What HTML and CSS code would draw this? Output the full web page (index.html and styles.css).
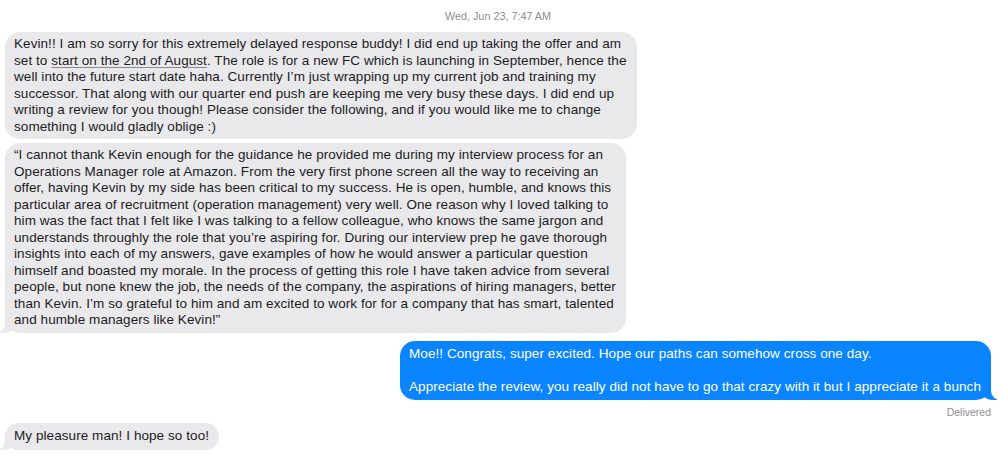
FILE: index.html
```html
<!DOCTYPE html>
<html lang="en">
<head>
<meta charset="utf-8">
<title>Messages</title>
<link rel="stylesheet" href="styles.css">
</head>
<body>
<main class="thread">
  <div class="stamp">Wed, Jun 23, 7:47 AM</div>

  <div class="row in first">
    <div class="bubble gray">Kevin!! I am so sorry for this extremely delayed response buddy! I did end up taking the offer and am<br>set to <span class="link">start on the 2nd of August</span>. The role is for a new FC which is launching in September, hence the<br>well into the future start date haha. Currently I’m just wrapping up my current job and training my<br>successor. That along with our quarter end push are keeping me very busy these days. I did end up<br>writing a review for you though! Please consider the following, and if you would like me to change<br>something I would gladly oblige :)</div>
  </div>

  <div class="row in follow">
    <div class="bubble gray tail-left">“I cannot thank Kevin enough for the guidance he provided me during my interview process for an<br>Operations Manager role at Amazon. From the very first phone screen all the way to receiving an<br>offer, having Kevin by my side has been critical to my success. He is open, humble, and knows this<br>particular area of recruitment (operation management) very well. One reason why I loved talking to<br>him was the fact that I felt like I was talking to a fellow colleague, who knows the same jargon and<br>understands throughly the role that you’re aspiring for. During our interview prep he gave thorough<br>insights into each of my answers, gave examples of how he would answer a particular question<br>himself and boasted my morale. In the process of getting this role I have taken advice from several<br>people, but none knew the job, the needs of the company, the aspirations of hiring managers, better<br>than Kevin. I’m so grateful to him and am excited to work for for a company that has smart, talented<br>and humble managers like Kevin!”</div>
  </div>

  <div class="row out">
    <div class="bubble blue tail-right">Moe!! Congrats, super excited. Hope our paths can somehow cross one day.<br><br>Appreciate the review, you really did not have to go that crazy with it but I appreciate it a bunch</div>
  </div>
  <div class="status">Delivered</div>

  <div class="row in last">
    <div class="bubble gray tail-left single">My pleasure man! I hope so too!</div>
  </div>
</main>
</body>
</html>
```

FILE: styles.css
```css
html {
  background: #ffffff;
}

html, body {
  margin: 0;
  padding: 0;
}

body {
  font-family: "Liberation Sans", Arial, sans-serif;
  -webkit-font-smoothing: antialiased;
}

.thread {
  position: relative;
  z-index: 0;
  display: flex;
  flex-direction: column;
  padding: 10px 13px 0 5px;
}

.stamp {
  text-align: center;
  font-size: 10.8px;
  line-height: 12px;
  color: #8e8e93;
  margin-bottom: 10px;
}

.row {
  display: flex;
}

.row.in {
  justify-content: flex-start;
}

.row.out {
  justify-content: flex-end;
  margin-top: 8px;
}

.row.follow {
  margin-top: 4px;
}

.row.last {
  margin-top: 5px;
}

.bubble {
  position: relative;
  font-size: 13.5px;
  letter-spacing: 0.07px;
  line-height: 16.5px;
  padding: 4px 10px 4px 9px;
  border-radius: 15px;
  white-space: nowrap;
}

.bubble.single {
  padding-top: 5px;
  padding-bottom: 5px;
  border-radius: 14px;
}

.gray {
  background: #e9e9eb;
  color: #1c1c1e;
}

.blue {
  background: #0a84ff;
  color: #ffffff;
  padding-top: 5px;
  padding-bottom: 5px;
}

.link {
  text-decoration: underline;
  text-decoration-color: #8a8a8e;
  text-underline-offset: 2px;
}

.status {
  align-self: flex-end;
  font-size: 10.5px;
  line-height: 12px;
  color: #8e8e93;
  margin-top: 6px;
}

/* bubble tails, drawn behind the bubble */
.tail-left::before,
.tail-right::before,
.tail-left::after,
.tail-right::after {
  content: "";
  position: absolute;
  bottom: 0;
  height: 18px;
  z-index: -1;
}

.tail-left::before,
.tail-right::before {
  width: 18px;
}

.tail-left::after,
.tail-right::after {
  width: 10px;
  background: #ffffff;
}

.tail-left::before {
  left: -6px;
  background: #e9e9eb;
  border-bottom-right-radius: 14px;
}

.tail-left::after {
  left: -10px;
  border-bottom-right-radius: 9px;
}

.tail-right::before {
  right: -6px;
  background: #0a84ff;
  border-bottom-left-radius: 14px;
}

.tail-right::after {
  right: -10px;
  border-bottom-left-radius: 9px;
}
```
